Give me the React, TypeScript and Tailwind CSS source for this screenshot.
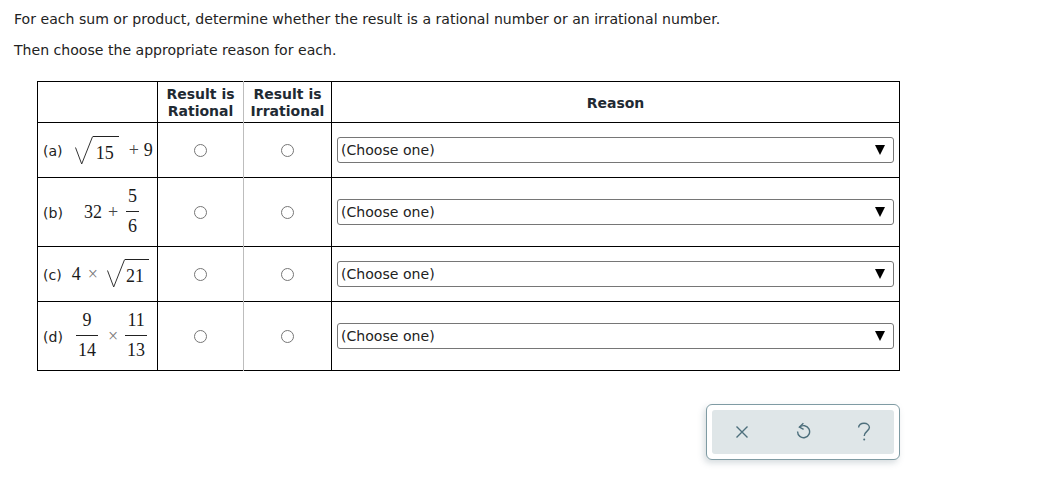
import React from "react";

const sans = "font-['DejaVu_Sans',Verdana,sans-serif]";
const serif = "font-['Liberation_Serif','Times_New_Roman',serif]";

function Radical({ children, w, tight }: { children: React.ReactNode; w: number; tight?: boolean }) {
  return (
    <span className="inline-flex items-start h-[29px]">
      <svg width="18" height="29" viewBox="0 0 18 29" className="block shrink-0">
        <path d="M0.5 11.5 L6.7 28 L17.6 0.5" fill="none" stroke="#333" strokeWidth="1" />
      </svg>
      <span className={`${serif} block border-t border-[#222] text-[18px] leading-[22px] ${tight ? "pl-[1px]" : "pl-[3px]"} pt-[5px] text-[#1a1a1a]`} style={{ width: w }}>
        {children}
      </span>
    </span>
  );
}

function Frac({ n, d, w }: { n: string; d: string; w: number }) {
  return (
    <span className={`${serif} inline-flex flex-col items-center text-[18px] mb-[3px] text-[#1a1a1a]`}>
      <span className="leading-[20px] h-[30px] flex items-center">{n}</span>
      <span className="h-px bg-[#222]" style={{ width: w }} />
      <span className="leading-[20px] h-[29px] flex items-center">{d}</span>
    </span>
  );
}

function RadioCell({ grey }: { grey?: boolean }) {
  return (
    <td className={`p-0 text-center align-middle ${grey ? "border-r border-r-[#bdbdbd]" : ""}`}>
      <span className="inline-block w-[13px] h-[13px] rounded-full border border-[#767676] bg-white align-middle" />
    </td>
  );
}

function Choose() {
  return (
    <td className="border-l border-black p-0 pl-[5px] pr-[5px] align-middle">
      <div className="h-[26px] rounded-[3px] border border-[#767676] bg-white flex items-center justify-between pl-[3px] pr-[8px]">
        <span className={`${sans} text-[14.08px] pt-[2px] text-[#222]`}>(Choose one)</span>
        <span className="w-0 h-0 border-l-[5px] border-r-[5px] border-t-[10px] border-l-transparent border-r-transparent border-t-black" />
      </div>
    </td>
  );
}

function Row({ label, h, children, last }: { label: string; h: number; children: React.ReactNode; last?: boolean }) {
  return (
    <tr className={last ? "" : "border-b border-black"} style={{ height: h }}>
      <td className="p-0 pl-[5px] border-r border-black align-middle">
        <div className="flex items-center">
          <span className={`${sans} text-[14.08px] pt-[3px] text-[#222]`}>{label}</span>
          {children}
        </div>
      </td>
      <RadioCell grey />
      <RadioCell />
      <Choose />
    </tr>
  );
}

export default function App() {
  const op = `${serif} text-[18px] leading-[20px] text-[#444]`;
  const num = `${serif} text-[18px] leading-[20px] text-[#1a1a1a]`;
  return (
    <div className={`w-[1041px] h-[495px] bg-white overflow-hidden ${sans} text-[#222] relative`}>
      <div className="pl-[14px] pt-[10px]">
        <p className="text-[14.08px] leading-[18px]">For each sum or product, determine whether the result is a rational number or an irrational number.</p>
        <p className="text-[14.08px] leading-[18px] mt-[13px]">Then choose the appropriate reason for each.</p>
      </div>
      <div className="pl-[37px] pt-[22px]">
        <table className="border-collapse border border-black table-fixed w-[863px]">
          <colgroup>
            <col className="w-[120px]" />
            <col className="w-[86px]" />
            <col className="w-[88px]" />
            <col />
          </colgroup>
          <tbody>
            <tr className="border-b border-black h-[41px]">
              <td className="border-r border-black p-0" />
              <td className="p-0 pt-[2px] text-center font-bold text-[14px] leading-[17px] border-r border-r-[#bdbdbd] text-[#1f2a33]">Result is<br />Rational</td>
              <td className="p-0 pt-[2px] text-center font-bold text-[14px] leading-[17px] text-[#1f2a33]">Result is<br />Irrational</td>
              <td className="border-l border-black p-0 pt-[2px] text-center font-bold text-[14px] text-[#1f2a33]">Reason</td>
            </tr>
            <Row label="(a)" h={55}>
              <span className="ml-[12px] flex items-center">
                <Radical w={26}>15</Radical>
                <span className={`${op} ml-[10px]`}>+</span>
                <span className={`${num} ml-[5px]`}>9</span>
              </span>
            </Row>
            <Row label="(b)" h={69}>
              <span className="ml-[21px] flex items-center">
                <span className={num}>32</span>
                <span className={`${op} ml-[6px]`}>+</span>
                <span className="ml-[8px] flex"><Frac n="5" d="6" w={13} /></span>
              </span>
            </Row>
            <Row label="(c)" h={55}>
              <span className="ml-[10px] flex items-center">
                <span className={num}>4</span>
                <span className={`${op} ml-[7px] text-[#777]`}>×</span>
                <span className="ml-[9px] mb-[2px] flex"><Radical w={24} tight>21</Radical></span>
              </span>
            </Row>
            <Row label="(d)" h={69} last>
              <span className="ml-[13px] flex items-center">
                <Frac n="9" d="14" w={22} />
                <span className={`${op} ml-[10px] mr-[7px] text-[#777]`}>×</span>
                <Frac n="11" d="13" w={22} />
              </span>
            </Row>
          </tbody>
        </table>
      </div>
      <div className="absolute left-[706px] top-[404px] w-[194px] h-[56px] rounded-[6px] border border-[#7f9ba3] bg-white p-[5px] shadow-[-2px_3px_6px_rgba(120,140,150,0.3)]">
        <div className="h-full rounded-[3px] bg-[#dfe6e8] flex items-center">
          <span className="flex justify-center w-[60px]">
            <svg width="14" height="14" viewBox="0 0 14 14" className="ml-[-1px]"><path d="M1.5 1.5 L12.5 12.5 M12.5 1.5 L1.5 12.5" stroke="#4d6f7c" strokeWidth="1.4" fill="none" /></svg>
          </span>
          <span className="flex justify-center w-[62px]">
            <svg width="16" height="18" viewBox="0 0 16 18" className="-mt-[2px]">
              <path d="M4.6 5.2 A6 6 0 1 1 2.6 9.6" fill="none" stroke="#4d6f7c" strokeWidth="1.4" />
              <path d="M8.4 1.2 L4.4 5 L8.6 7.4" fill="none" stroke="#4d6f7c" strokeWidth="1.4" />
            </svg>
          </span>
          <span className="flex justify-center w-[60px]">
            <svg width="14" height="20" viewBox="0 0 14 20" className="ml-[-1px]">
              <path d="M1.6 5.6 C1.6 2.8 4 1.2 7 1.2 C10 1.2 12.4 3 12.4 5.6 C12.4 9 7.2 9.4 7.2 14" fill="none" stroke="#4d6f7c" strokeWidth="1.4" />
              <circle cx="7.2" cy="17.6" r="1" fill="#4d6f7c" />
            </svg>
          </span>
        </div>
      </div>
    </div>
  );
}
